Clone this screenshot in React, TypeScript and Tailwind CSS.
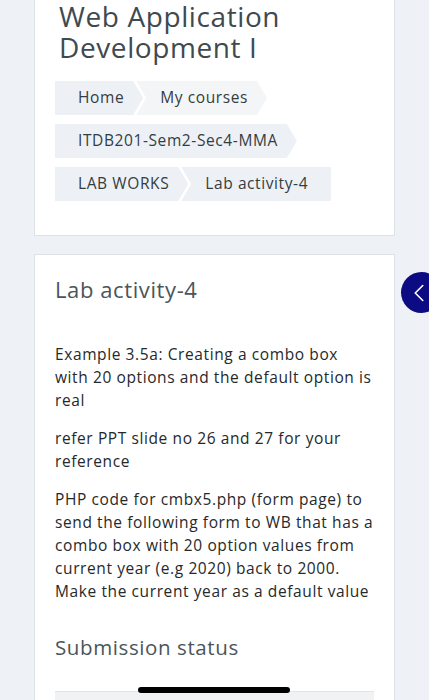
import { ChevronLeft } from "lucide-react";

const font = { fontFamily: '"Open Sans", "Liberation Sans", sans-serif' };

type Crumb = { label: string; first?: boolean; last?: boolean; light?: boolean };

const rows: Crumb[][] = [
  [{ label: "Home", first: true }, { label: "My courses", light: true }],
  [{ label: "ITDB201-Sem2-Sec4-MMA", first: true }],
  [{ label: "LAB WORKS", first: true }, { label: "Lab activity-4", last: true }],
];

function CrumbItem({ c }: { c: Crumb }) {
  let clip = "polygon(0 0, calc(100% - 10px) 0, 100% 50%, calc(100% - 10px) 100%, 0 100%, 10px 50%)";
  if (c.first) clip = "polygon(0 0, calc(100% - 10px) 0, 100% 50%, calc(100% - 10px) 100%, 0 100%)";
  if (c.last) clip = "polygon(0 0, 100% 0, 100% 100%, 0 100%, 10px 50%)";
  return (
    <div
      className={`h-[34px] flex items-center text-[15.5px] tracking-[0.6px] text-[#343d42] ${
        c.first ? "pl-[23px]" : "-ml-[7px] pl-[24px]"
      } ${c.last ? "pr-[23px]" : "pr-[19px]"} ${c.light ? "bg-[#f4f5f7]" : "bg-[#edf1f6]"}`}
      style={{ clipPath: clip }}
    >
      {c.label}
    </div>
  );
}

export default function App() {
  return (
    <div className="min-h-[700px] bg-[#eef2f6] relative overflow-hidden tracking-[0.6px]" style={font}>
      <div className="mx-[34px] bg-white border border-t-0 border-[#dde2e7] px-[20px] pt-[1px] pb-[34px]">
        <h1 className="pl-1 text-[28px] leading-[31px] text-[#3e4a50] font-normal">
          Web Application Development I
        </h1>
        <div className="mt-[18px] flex flex-col gap-[9px]">
          {rows.map((r, i) => (
            <div key={i} className="flex">
              {r.map((c) => (
                <CrumbItem key={c.label} c={c} />
              ))}
            </div>
          ))}
        </div>
      </div>

      <div className="mt-[18px] mx-[34px] bg-white border border-[#dde2e7] px-[20px] pt-[20px] pb-10">
        <h2 className="text-[22px] leading-[28px] text-[#4a555b]">Lab activity-4</h2>
        <div className="mt-[40px] text-[15.5px] leading-[23px] text-[#26292b] flex flex-col gap-[15px]">
          <p>Example 3.5a: Creating a combo box with 20 options and the default option is real</p>
          <p>refer PPT slide no 26 and 27 for your reference</p>
          <p>
            PHP code for cmbx5.php (form page) to send the following form to WB that has a combo box
            with 20 option values from current year (e.g 2020) back to 2000. Make the current year as
            a default value
          </p>
        </div>
        <h3 className="mt-[30px] text-[20.5px] leading-[28px] text-[#4a555b]">Submission status</h3>
        <div className="mt-[30px] h-[40px] bg-[#f1f2f3] border-t border-[#e2e4e6]" />
      </div>

      <button className="absolute left-[401px] top-[272px] w-[41px] h-[41px] rounded-full bg-[#0d0b83] flex items-center pl-[3px] text-white">
        <ChevronLeft size={30} strokeWidth={1.3} />
      </button>

      <div className="absolute left-[138px] top-[687px] w-[152px] h-[6px] rounded-full bg-black" />
    </div>
  );
}
